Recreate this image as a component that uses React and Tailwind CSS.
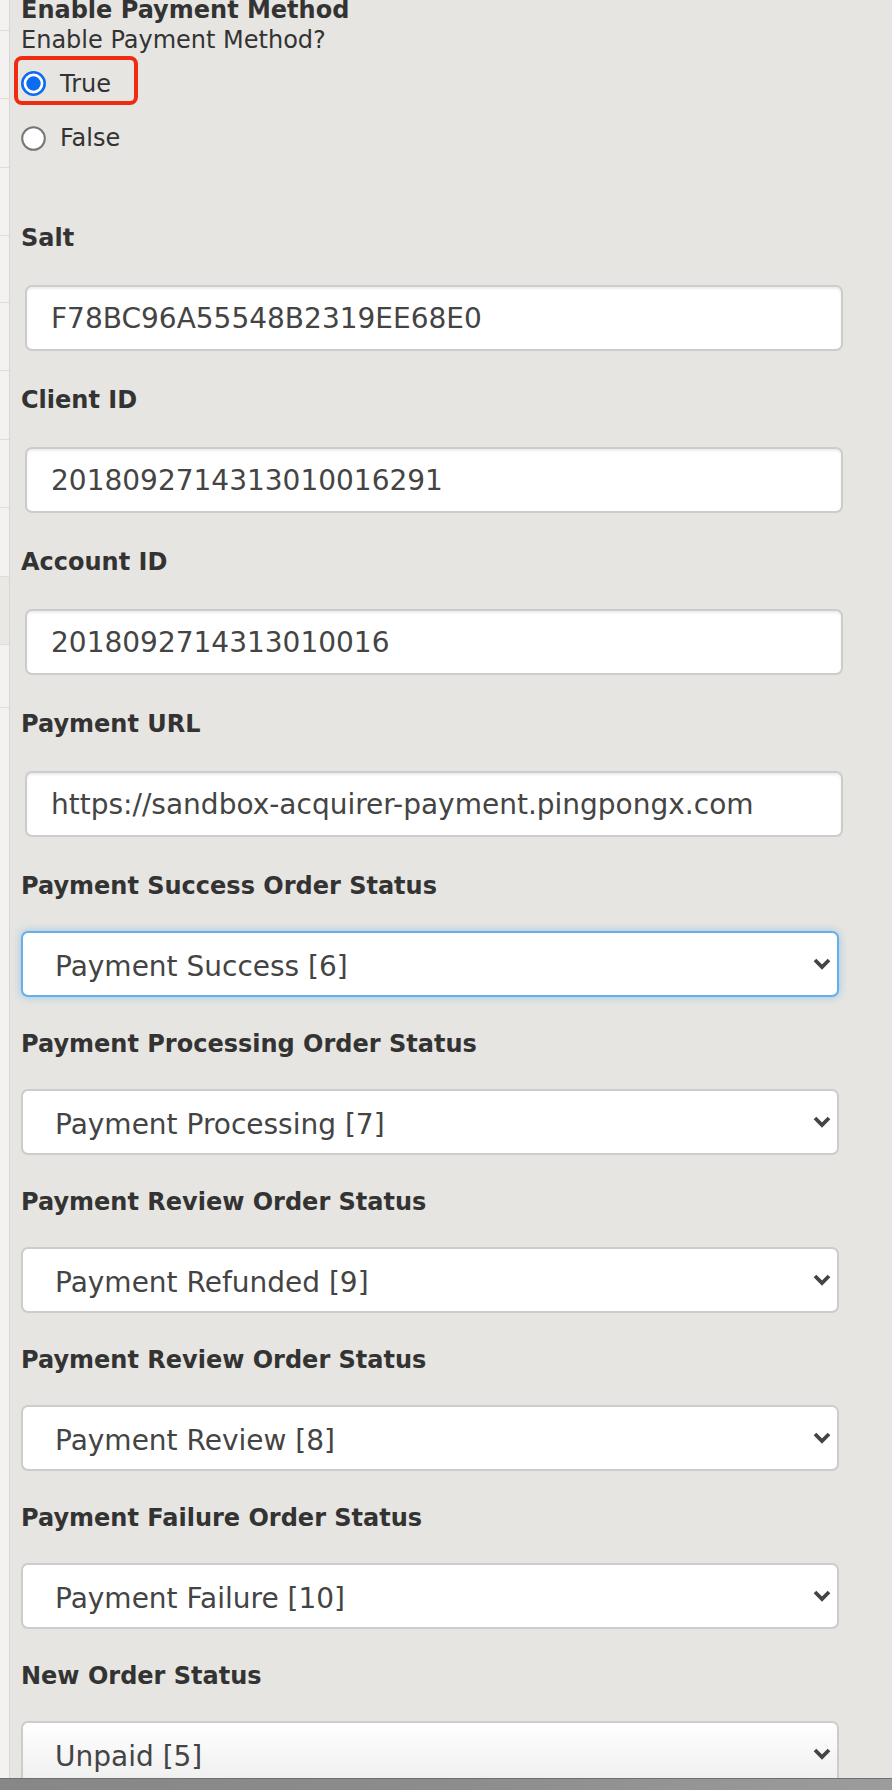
import React from "react";

const textFields = [
  { label: "Salt", value: "F78BC96A55548B2319EE68E0" },
  { label: "Client ID", value: "2018092714313010016291" },
  { label: "Account ID", value: "2018092714313010016" },
  { label: "Payment URL", value: "https://sandbox-acquirer-payment.pingpongx.com" },
];

const selectFields = [
  { label: "Payment Success Order Status", value: "Payment Success [6]", focused: true },
  { label: "Payment Processing Order Status", value: "Payment Processing [7]" },
  { label: "Payment Review Order Status", value: "Payment Refunded [9]" },
  { label: "Payment Review Order Status", value: "Payment Review [8]" },
  { label: "Payment Failure Order Status", value: "Payment Failure [10]" },
  { label: "New Order Status", value: "Unpaid [5]", last: true },
];

function Chevron() {
  return (
    <svg width="18" height="12" viewBox="0 0 18 12" className="shrink-0">
      <polyline points="2,2 9,9 16,2" fill="none" stroke="#444" strokeWidth="3.8" />
    </svg>
  );
}

function Radio({ checked }) {
  return checked ? (
    <svg width="25" height="25" viewBox="0 0 25 25" className="shrink-0">
      <circle cx="12.5" cy="12.5" r="11.2" fill="#fff" stroke="#0b6cf2" strokeWidth="2.6" />
      <circle cx="12.5" cy="12.5" r="7.2" fill="#0b6cf2" />
    </svg>
  ) : (
    <svg width="25" height="25" viewBox="0 0 25 25" className="shrink-0">
      <circle cx="12.5" cy="12.5" r="11.3" fill="#fff" stroke="#767676" strokeWidth="2" />
    </svg>
  );
}

export default function App() {
  const stripRows = [68, 69, 68, 67, 68, 69, 68, 69, 68, 63];

  return (
    <div className="w-[892px] h-[1790px] flex flex-col overflow-hidden bg-[#e6e5e1] text-[#333] font-['DejaVu_Sans','Verdana',sans-serif]">
      <div className="flex flex-1 min-h-0 overflow-hidden">
        {/* left edge of the page behind */}
        <div className="w-[10px] shrink-0 flex flex-col bg-[#f3f2f0] border-r border-[#d7d6d2]">
          <div className="h-[31px] shrink-0 border-b border-[#dddcd8]" />
          {stripRows.map((h, i) => (
            <div
              key={i}
              style={{ height: h }}
              className={i === 8 ? "shrink-0 border-b border-[#dddcd8] bg-[#e9e8e5]" : "shrink-0 border-b border-[#dddcd8]"}
            />
          ))}
        </div>

        <div className="flex-1 pl-[11px] flex flex-col">
          <div className="shrink-0 text-[24px] font-bold leading-[30px] -mt-[5px]">Enable Payment Method</div>
          <div className="shrink-0 text-[24px] leading-[30px]">Enable Payment Method?</div>

          <div className="shrink-0 mt-[1px] -ml-[7px] w-[124px] h-[49px] border-4 border-[#ef2c12] rounded-[8px] flex items-center pt-[6px] pl-[3px] gap-[14px]">
            <Radio checked />
            <span className="text-[24px] leading-[30px]">True</span>
          </div>

          <div className="shrink-0 mt-[18px] h-[30px] flex items-center gap-[14px]">
            <Radio />
            <span className="text-[24px] leading-[30px]">False</span>
          </div>

          <div className="shrink-0 mt-[70px] flex flex-col">
            {textFields.map((f) => (
              <div key={f.label} className="shrink-0 flex flex-col mb-[34px]">
                <div className="text-[24px] font-bold leading-[30px]">{f.label}</div>
                <input
                  readOnly
                  value={f.value}
                  className="shrink-0 mt-[32px] ml-[4px] w-[818px] h-[66px] bg-white border-2 border-[#cccccc] rounded-[7px] pl-[24px] text-[28px] text-[#444] outline-none shadow-[inset_0_2px_2px_rgba(0,0,0,0.075)]"
                />
              </div>
            ))}

            {selectFields.map((f, i) => (
              <div key={i} className="shrink-0 flex flex-col mb-[32px]">
                <div className="text-[24px] font-bold leading-[30px]">{f.label}</div>
                <div
                  className={
                    f.focused
                      ? "shrink-0 mt-[30px] w-[818px] h-[66px] bg-white border-2 border-[#66afe9] rounded-[7px] pl-[32px] pr-[6px] flex items-center justify-between shadow-[0_0_9px_rgba(102,175,233,0.6)]"
                      : f.last
                      ? "shrink-0 mt-[30px] w-[818px] h-[66px] bg-gradient-to-b from-white to-[#eeeeee] border-2 border-[#cccccc] rounded-[7px] pl-[32px] pr-[6px] flex items-center justify-between"
                      : "shrink-0 mt-[30px] w-[818px] h-[66px] bg-white border-2 border-[#cccccc] rounded-[7px] pl-[32px] pr-[6px] flex items-center justify-between"
                  }
                >
                  <span className="text-[28px] text-[#444] leading-[34px] pt-[5px]">{f.value}</span>
                  <Chevron />
                </div>
              </div>
            ))}
          </div>
        </div>
      </div>

      <div className="h-[12px] shrink-0 bg-gradient-to-r from-[#878787] via-[#8c8c8c] to-[#9c9c9c] border-t border-[#6f6f6f]" />
    </div>
  );
}
